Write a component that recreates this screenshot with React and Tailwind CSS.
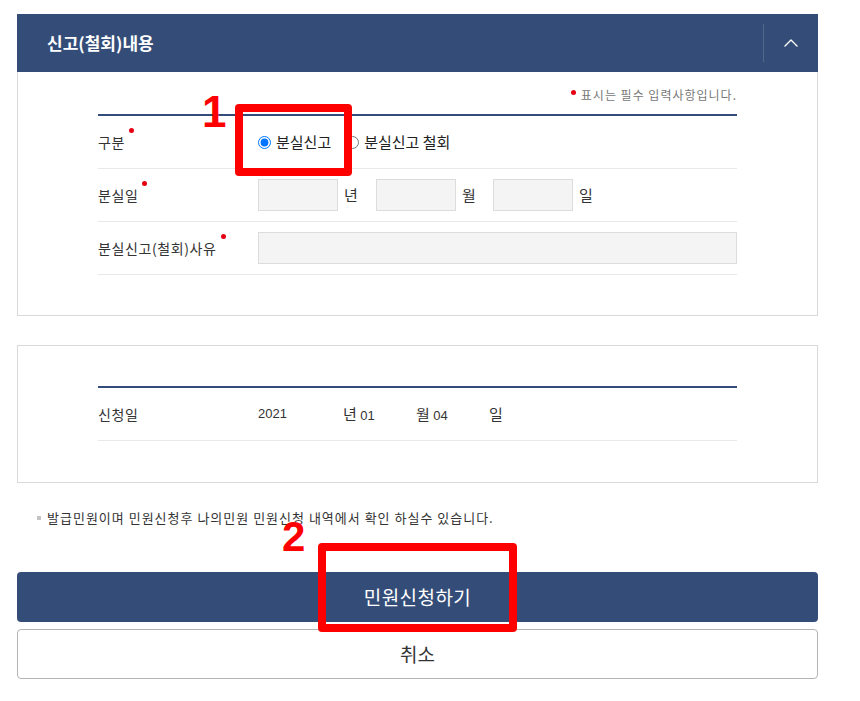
import { ChevronUp } from 'lucide-react';

const font = { fontFamily: '"Noto Sans CJK KR", "Noto Sans", sans-serif' };
const latin = { fontFamily: '"Liberation Sans", sans-serif' };

function Req({ children }) {
  return (
    <span className="relative">
      {children}
      <span className="absolute -right-[9px] -top-[4px] w-[5px] h-[5px] rounded-full bg-[#e50012]" />
    </span>
  );
}

function Row({ label, children }) {
  return (
    <div className="flex items-center h-[53px] border-b border-[#e8e8e8]">
      <div className="w-[160px] shrink-0 text-[14px] leading-[20px] tracking-[0.6px] text-[#333]">{label}</div>
      <div className="flex-1 flex items-center">{children}</div>
    </div>
  );
}

function DateBox() {
  return <div className="w-[80px] h-[32px] bg-[#f4f4f4] border border-[#dcdcdc]" />;
}

export default function App() {
  return (
    <div className="relative min-h-[701px] bg-white" style={font}>
      <div className="ml-[17px] w-[801px] pt-[14px]">
        {/* 신고(철회)내용 */}
        <div className="flex items-center h-[58px] bg-[#344d78]">
          <h2 className="flex-1 pl-[30px] text-[17px] font-bold text-white">신고(철회)내용</h2>
          <div className="w-[55px] h-[38px] border-l border-white/15 flex items-center justify-center">
            <ChevronUp size={24} strokeWidth={1.4} className="text-white" />
          </div>
        </div>
        <div className="border-x border-b border-[#d9d9d9] px-[80px] pt-[14px] pb-[40px]">
          <p className="h-[18px] text-right text-[12px] leading-[18px] text-[#777] tracking-[1px]">
            <span className="relative -top-[5px] mr-[5px] inline-block w-[5px] h-[5px] rounded-full bg-[#e50012]" />
            표시는 필수 입력사항입니다.
          </p>
          <div className="mt-[10px] border-t-2 border-[#344d78]">
            <Row label={<Req>구분</Req>}>
              <label className="flex items-center gap-[5px] text-[15px] text-[#222]">
                <input type="radio" name="kind" defaultChecked className="m-0 w-[13px] h-[13px]" />
                분실신고
              </label>
              <label className="ml-[15px] flex items-center gap-[5px] text-[15px] text-[#222]">
                <input type="radio" name="kind" className="m-0 w-[13px] h-[13px]" />
                분실신고 철회
              </label>
            </Row>
            <Row label={<Req>분실일</Req>}>
              <DateBox />
              <span className="ml-[6px] w-[32px] text-[15px] text-[#333]">년</span>
              <DateBox />
              <span className="ml-[6px] w-[31px] text-[15px] text-[#333]">월</span>
              <DateBox />
              <span className="ml-[6px] text-[15px] text-[#333]">일</span>
            </Row>
            <Row label={<Req>분실신고(철회)사유</Req>}>
              <div className="w-full h-[32px] bg-[#f4f4f4] border border-[#dcdcdc]" />
            </Row>
          </div>
        </div>

        {/* 신청일 */}
        <div className="mt-[29px] border border-[#d9d9d9] px-[80px] pt-[40px] pb-[41px]">
          <div className="border-t-2 border-[#344d78]">
            <Row label="신청일">
              <span className="w-[85px] text-[13px] tracking-normal text-[#333]" style={latin}>2021</span>
              <span className="w-[73px] text-[15px] tracking-normal text-[#333]">년 <span className="text-[13px]" style={latin}>01</span></span>
              <span className="w-[73px] text-[15px] tracking-normal text-[#333]">월 <span className="text-[13px]" style={latin}>04</span></span>
              <span className="text-[15px] tracking-normal text-[#333]">일</span>
            </Row>
          </div>
        </div>

        <p className="mt-[26px] pl-[20px] flex items-center gap-[6px] h-[18px] text-[13px] text-[#333] tracking-[1px]">
          <span className="w-[4px] h-[4px] bg-[#c4c4c4]" />
          발급민원이며 민원신청후 나의민원 민원신청 내역에서 확인 하실수 있습니다.
        </p>

        <button className="mt-[45px] w-full h-[50px] rounded-[4px] bg-[#344d78] text-[19px] tracking-[0.4px] text-white">민원신청하기</button>
        <button className="mt-[7px] w-full h-[50px] rounded-[4px] border border-[#b4b4b4] bg-white text-[19px] text-[#333]">취소</button>
      </div>

      {/* red annotations */}
      <span className="absolute left-[202px] top-[86px] text-[44px] leading-[52px] font-bold text-[#ff0000]" style={latin}>1</span>
      <div className="absolute left-[235px] top-[104px] w-[117px] h-[72px] border-[8px] border-[#ff0000] rounded-[4px]" />
      <span className="absolute left-[282px] top-[512px] text-[42px] leading-[50px] font-bold text-[#ff0000]" style={latin}>2</span>
      <div className="absolute left-[318px] top-[543px] w-[199px] h-[89px] border-[8px] border-[#ff0000] rounded-[4px]" />
    </div>
  );
}
